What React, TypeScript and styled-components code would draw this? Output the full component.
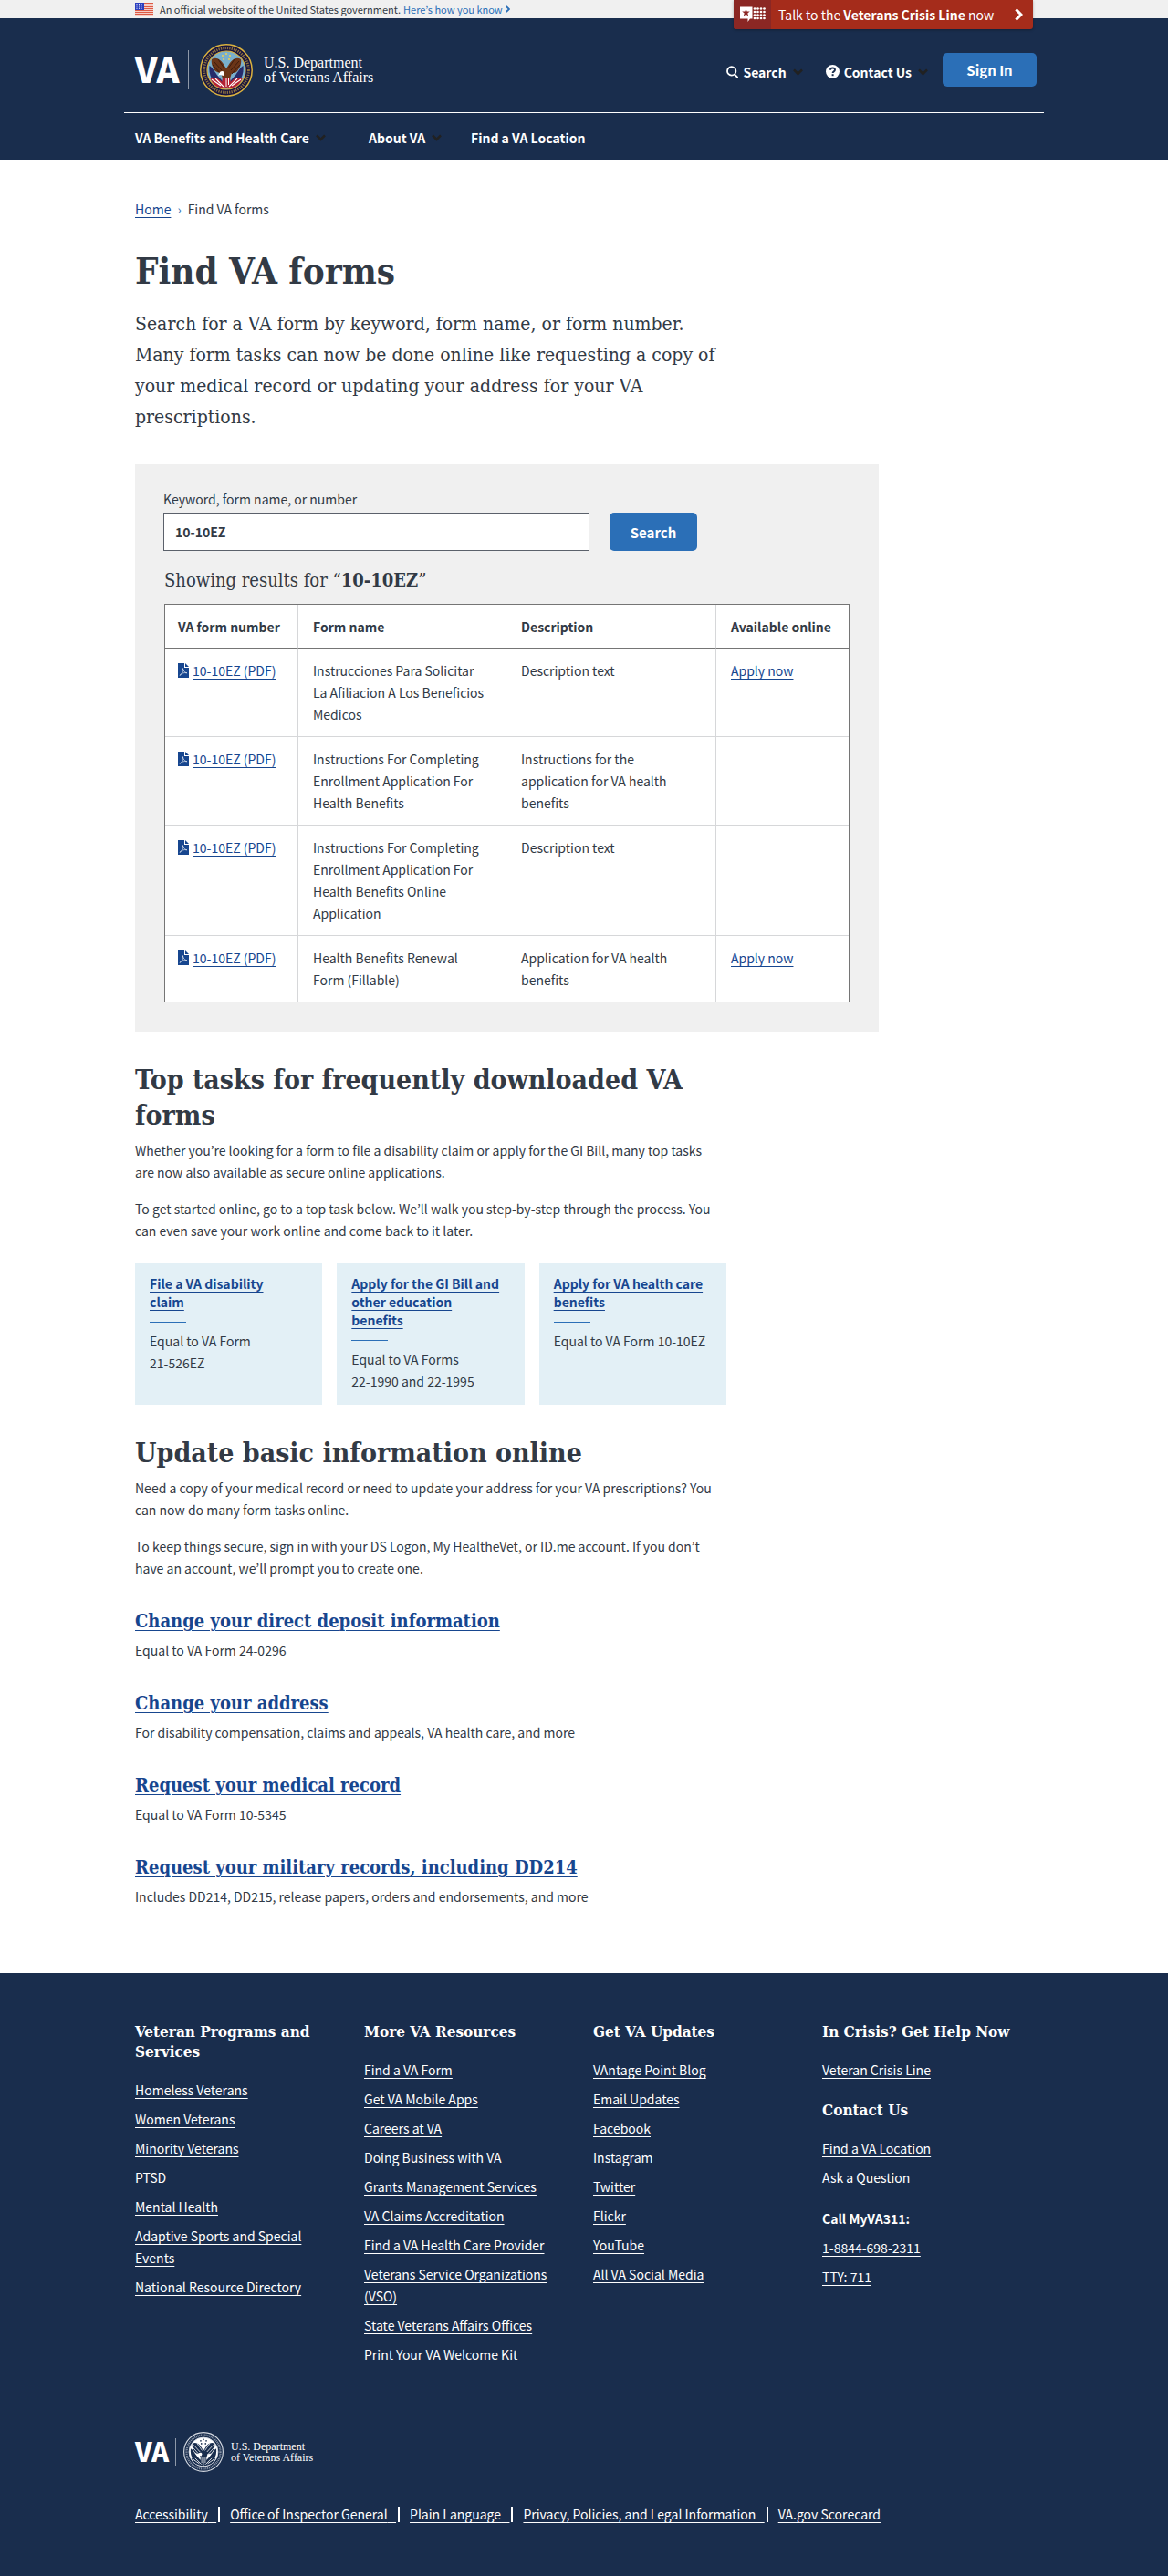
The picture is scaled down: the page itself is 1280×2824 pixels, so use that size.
import React from "react";
import styled, { createGlobalStyle, css } from "styled-components";

const sans = '"Noto Sans CJK KR", "Noto Sans", sans-serif';
const slab = '"DejaVu Serif Condensed", "DejaVu Serif", serif';
const navy = "#192d4d";
const ink = "#323a45";
const linkBlue = "#17468f";
const blue = "#2b6fb7";
const gray = "#f0f0f0";

const GlobalStyle = createGlobalStyle`
  *, *::before, *::after { box-sizing: border-box; }
  body {
    margin: 0;
    background: #fff;
    color: ${ink};
    font-family: ${sans};
    font-size: 14px;
    line-height: 24px;
  }
  h1, h2, h3, h4, p, ul { margin: 0; padding: 0; }
  ul { list-style: none; }
  button, input { font-family: inherit; font-size: inherit; }
`;

const Container = styled.div`
  max-width: 1008px;
  margin: 0 auto;
  padding: 0 12px;
`;

const Link = styled.a`
  color: ${linkBlue};
  text-decoration: underline;
  text-decoration-thickness: 1px;
  text-underline-offset: 3px;
`;

/* ---------- Government banner ---------- */

const Banner = styled.div`
  background: ${gray};
`;

const BannerRow = styled(Container)`
  position: relative;
  display: flex;
  align-items: center;
  height: 20px;
  font-size: 11px;
  line-height: 20px;
`;

const BannerText = styled.span`
  margin: 0 3px 0 7px;
`;

const BannerToggle = styled.button`
  display: flex;
  align-items: center;
  gap: 3px;
  padding: 0;
  border: 0;
  background: none;
  color: ${blue};
  line-height: 20px;
  cursor: pointer;

  span {
    text-decoration: underline;
    text-underline-offset: 2px;
  }
`;

const CrisisButton = styled.button`
  position: absolute;
  top: 0;
  right: 12px;
  display: flex;
  align-items: stretch;
  width: 328px;
  height: 32px;
  padding: 0;
  overflow: hidden;
  border: 0;
  border-radius: 0 0 3px 3px;
  background: #a52c1b;
  box-shadow: 0 1px 3px rgba(0, 0, 0, 0.3);
  color: #fff;
  font-size: 14px;
  line-height: 32px;
  cursor: pointer;
`;

const CrisisIcon = styled.span`
  display: flex;
  align-items: center;
  justify-content: center;
  width: 41px;
  background: #8b2724;
`;

const CrisisLabel = styled.span`
  flex: 1;
  padding-left: 8px;
  text-align: left;
`;

const CrisisArrow = styled.span`
  display: flex;
  align-items: center;
  padding-right: 11px;
`;

/* ---------- Header ---------- */

const Header = styled.header`
  background: ${navy};
  color: #fff;
`;

const HeaderInner = styled.div`
  max-width: 1008px;
  margin: 0 auto;
`;

const HeaderTop = styled.div`
  display: flex;
  align-items: center;
  justify-content: space-between;
  height: 104px;
  padding: 10px 8px 0 12px;
  border-bottom: 1px solid #fff;
`;

const Brand = styled.a<{ $small?: boolean }>`
  display: flex;
  align-items: center;
  gap: ${(p) => (p.$small ? 8 : 12)}px;
  color: #fff;
  text-decoration: none;
`;

const BrandMark = styled.span<{ $small?: boolean }>`
  width: ${(p) => (p.$small ? 36 : 46)}px;
  padding-bottom: ${(p) => (p.$small ? 4 : 5)}px;
  font-size: ${(p) => (p.$small ? 29 : 38)}px;
  line-height: ${(p) => (p.$small ? 30 : 43)}px;
  font-weight: 900;
`;

const BrandRule = styled.span<{ $small?: boolean }>`
  width: 1px;
  height: ${(p) => (p.$small ? 30 : 43)}px;
  background: #8e98a8;
`;

const BrandName = styled.span<{ $small?: boolean }>`
  font-family: "Liberation Serif", "Times New Roman", serif;
  font-size: ${(p) => (p.$small ? 12 : 16)}px;
  line-height: ${(p) => (p.$small ? 12 : 16)}px;
`;

const Utilities = styled.div`
  display: flex;
  align-items: center;
`;

const MenuButton = styled.button`
  display: flex;
  align-items: center;
  gap: 5px;
  padding: 0;
  border: 0;
  background: none;
  color: #fff;
  font-size: 14px;
  font-weight: 700;
  line-height: 24px;
  text-align: left;
  white-space: nowrap;
  cursor: pointer;

  svg:last-child { margin-left: 2px; }
`;

const UtilityGroup = styled.div`
  display: flex;
  gap: 25px;
  padding: 4px 16px 0 0;
`;

const primary = css`
  border: 0;
  border-radius: 5px;
  background: ${blue};
  color: #fff;
  font-weight: 700;
  text-align: center;
  cursor: pointer;
`;

const SignIn = styled.button`
  ${primary}
  width: 103px;
  height: 37px;
  padding: 0;
  font-size: 15px;
`;

const Nav = styled.nav`
  display: grid;
  grid-template-columns: 256px 112px auto;
  align-items: center;
  height: 51px;
  padding: 2px 12px 0;
`;

const NavLink = styled.a`
  color: #fff;
  font-weight: 700;
  text-decoration: none;
`;

/* ---------- Main ---------- */

const Main = styled.main`
  padding: 42px 0 72px;
`;

const Breadcrumb = styled.nav`
  display: flex;
  gap: 7px;

  span[aria-hidden] { color: ${blue}; }
`;

const Prose = styled.div`
  max-width: 640px;
`;

const PageTitle = styled.h1`
  margin-top: 30px;
  font-family: ${slab};
  font-size: 40px;
  line-height: 52px;
`;

const Intro = styled.p`
  margin-top: 15px;
  font-family: ${slab};
  font-size: 21px;
  line-height: 34px;
`;

const ResultsPanel = styled.section`
  max-width: 815px;
  margin-top: 35px;
  padding: 26px 32px 32px;
  background: ${gray};
`;

const SearchForm = styled.form`
  display: grid;
  grid-template-columns: 467px 96px;
  column-gap: 22px;
  row-gap: 3px;
  margin-left: -1px;

  label { grid-column: 1 / -1; }
`;

const SearchInput = styled.input`
  height: 42px;
  padding: 0 12px;
  border: 1px solid #5b616b;
  border-radius: 0;
  background: #fff;
  color: ${ink};
  font-weight: 700;
`;

const SearchButton = styled.button`
  ${primary}
  height: 42px;
  padding: 0;
  font-size: 15px;
`;

const ResultsTitle = styled.h2`
  margin: 18px 0 12px;
  font-family: ${slab};
  font-size: 20px;
  font-weight: 400;
  line-height: 28px;
`;

const Table = styled.table`
  width: 100%;
  border: 1px solid #757575;
  border-collapse: separate;
  border-spacing: 0;
  table-layout: fixed;
  background: #fff;
`;

const cell = css`
  padding: 12px 16px;
  border-right: 1px solid #d6d7d9;
  text-align: left;
  vertical-align: top;

  &:first-child { padding-left: 14px; padding-right: 8px; }
  &:last-child { border-right: 0; padding-right: 8px; }
`;

const Th = styled.th<{ $w?: number }>`
  ${cell}
  ${(p) => (p.$w ? `width: ${p.$w}px;` : "")}
  padding-bottom: 11px;
  border-bottom: 1px solid #757575;
`;

const Td = styled.td`
  ${cell}
  border-bottom: 1px solid #d6d7d9;

  tr:last-child > & { border-bottom: 0; }
`;

const PdfLink = styled.span`
  display: flex;
  align-items: center;
  gap: 4px;
`;

const SectionTitle = styled.h2`
  font-family: ${slab};
  font-size: 30px;
  line-height: 39px;
`;

const Section = styled.section`
  max-width: 648px;
  margin-top: 33px;

  > p {
    max-width: 640px;
    margin-top: 16px;
  }
  > h2 + p { margin-top: 7px; }
`;

const Cards = styled.div`
  display: grid;
  grid-template-columns: repeat(3, 1fr);
  gap: 16px;
  margin-top: 24px;
`;

const Card = styled.div`
  min-height: 155px;
  padding: 12px 16px 14px;
  background: #e3f0f6;
`;

const CardTitle = styled.h3`
  font-size: 14px;
  line-height: 20px;

  &::after {
    content: "";
    display: block;
    width: 40px;
    height: 1px;
    margin: 12px 0 8px;
    background: ${blue};
  }
`;

const Task = styled.div`
  margin-top: 30px;
`;

const TaskTitle = styled.h3`
  margin-bottom: 4px;
  font-family: ${slab};
  font-size: 20px;
  line-height: 32px;
`;

/* ---------- Footer ---------- */

const Footer = styled.footer`
  padding: 53px 0 56px;
  background: ${navy};
  color: #fff;
`;

const FooterColumns = styled.div`
  display: grid;
  grid-template-columns: repeat(4, 1fr);
  column-gap: 20px;
  min-height: 450px;
`;

const FooterColumn = styled.div`
  padding-right: 14px;
`;

const FooterTitle = styled.h4`
  font-family: ${slab};
  font-size: 17px;
  line-height: 22px;

  ul + & { margin-top: 21px; }
`;

const FooterList = styled.ul`
  margin-top: 19px;

  li + li { margin-top: 8px; }
`;

const FooterLink = styled(Link)`
  color: #fff;
`;

const CallList = styled(FooterList)`
  margin-top: 21px;
`;

const LegalLinks = styled.ul`
  display: flex;
  margin-top: 34px;

  li + li {
    margin-left: 2px;
  }
  li + li::before {
    content: "";
    display: inline-block;
    width: 2px;
    height: 17px;
    margin-right: 11px;
    background: #fff;
    vertical-align: -3px;
  }
`;

/* ---------- Drawings ---------- */

const Flag = () => (
  <svg width="20" height="14" viewBox="0 0 20 14" role="img" aria-label="U.S. flag">
    <rect width="20" height="14" fill="#fff" />
    {[0, 2, 4, 6, 8, 10, 12].map((y) => (
      <rect key={y} y={y} width="20" height="1.3" fill="#dc5a45" />
    ))}
    <rect width="10" height="8" fill="#2b3fc0" />
    {[2, 4.5, 7].map((x) => [1.6, 4, 6.2].map((y) => (
      <circle key={`${x}-${y}`} cx={x} cy={y} r=".6" fill="#fff" />
    )))}
  </svg>
);

const Chevron = ({ color = "#212121" }: { color?: string }) => (
  <svg width="11" height="8" viewBox="0 0 11 8" fill="none" stroke={color} strokeWidth="2.6" aria-hidden="true">
    <path d="M1 1.4 5.5 5.9 10 1.4" />
  </svg>
);

const ArrowRight = ({ w, h, s }: { w: number; h: number; s: number }) => (
  <svg width={w} height={h} viewBox="0 0 9 14" fill="none" stroke="currentColor" strokeWidth={s} aria-hidden="true">
    <path d="M1.4 1.4 7 7l-5.6 5.6" />
  </svg>
);

const ChatKeypad = () => (
  <svg width="29" height="18" viewBox="0 0 29 18" fill="#fff" aria-hidden="true">
    <path d="M1 .5h13.500v13H12L9.500 17v-3.500H1z" />
    <path fill="#8b2724" d="m7.500 2.600 1.100 3h3.200L9.300 7.500l.9 3.100-2.700-1.900-2.700 1.900.9-3.100-2.500-1.900h3.200z" />
    {[17.5, 21, 24.5, 28].map((x) => [2.5, 6, 9.5, 13].map((y) => (
      <circle key={`${x}-${y}`} cx={x - 0.5} cy={y} r="1.350" />
    )))}
  </svg>
);

const SearchIcon = () => (
  <svg width="13" height="14" viewBox="0 0 13 14" fill="none" stroke="#fff" strokeWidth="1.800" aria-hidden="true">
    <circle cx="5.700" cy="5.900" r="4.700" />
    <path d="m9 9.500 3.500 3.500" />
  </svg>
);

const HelpIcon = () => (
  <svg width="15" height="15" viewBox="0 0 15 15" aria-hidden="true">
    <circle cx="7.500" cy="7.500" r="7.500" fill="#fff" />
    <path d="M5 5.700C5 2.700 10 2.800 10 5.600c0 1.900-2.400 1.700-2.400 3.500" fill="none" stroke={navy} strokeWidth="1.900" />
    <rect x="6.600" y="10.200" width="2" height="2" fill={navy} />
  </svg>
);

const PdfIcon = () => (
  <svg width="12" height="16" viewBox="0 0 12 16" aria-hidden="true">
    <path d="M0 0h7v5h5v11H0z" fill={linkBlue} />
    <path d="M8 0 12 4H8z" fill={linkBlue} />
    <path d="M5.300 5.500c1.200 2.800.2 5.200-3.300 8 .8-2 4.500-3.600 8-2.700-2.800-.5-4.500-2.500-4.700-5.300z" fill="none" stroke="#fff" strokeWidth=".6" />
  </svg>
);

const Seal = ({ size, mono }: { size: number; mono?: boolean }) => {
  const gold = mono ? "#d5dae2" : "#d9b13f";
  const ring = mono ? navy : "#17133f";
  const sky = mono ? "#fff" : "#79afcc";
  const wing = mono ? navy : "#6b3518";
  const wingDark = mono ? "#fff" : "#3c1c0e";
  const red = mono ? navy : "#b52232";
  const flagBlue = mono ? navy : "#262c6b";
  return (
    <svg width={size} height={size} viewBox="0 0 58 58" fill="none" role="img" aria-label="Department seal">
      <circle cx="29" cy="29" r="28.200" fill={ring} stroke={gold} strokeWidth="1.500" />
      <circle cx="29" cy="29" r="24.400" stroke={gold} strokeWidth="3" strokeDasharray="1.300 1.100" opacity=".6" />
      <circle cx="29" cy="29" r="21" fill={sky} stroke={gold} strokeWidth="1.200" />
      <path d="M10.500 24c3 1.500 6 7 9 11l9 10-3 3C16 46 9 36 10.500 24zM47.500 24c-3 1.500-6 7-9 11l-9 10 3 3C42 46 49 36 47.500 24z" fill={flagBlue} />
      <path d="M11.500 38c5-2 9 0 12 3l5 8C20 49 14 45 11.500 38zM46.500 38c-5-2-9 0-12 3l-5 8C38 49 44 45 46.500 38z" fill={red} />
      <path d="m13 39 10 7m-6-8 9 9m19-8-10 7m6-8-9 9" stroke="#fff" strokeWidth="1.100" />
      <path d="M13 17c5-3 10 0 14 7l2 3 2-3c4-7 9-10 14-7 1 5-1 9-4 13-2 2-4 2-6 2l-2 6h-8l-2-6c-2 0-5-1-7-3-2-4-4-7-3-12z" fill={wing} />
      <path d="m15 19 9 10m-10-6 9 10m-3-16 7 10m16-8-9 10m10-6-9 10m3-16-7 10" stroke={wingDark} strokeWidth="1" />
      <path d="M22 31c2-2 5-1 5 1l-1 3-4-1-2 1z" fill="#fff" />
      <path d="M25 37h8l1 6-5 6-5-6z" fill={red} />
      <path d="M26.500 37v8m2.500-8v10m2.500-10v8" stroke="#fff" strokeWidth="1" />
      {[[25, 13], [29, 11], [33, 13], [26, 17], [32, 17]].map(([x, y]) => (
        <circle key={`${x}-${y}`} cx={x} cy={y} r="1.100" fill={mono ? navy : "#e6cf5a"} />
      ))}
    </svg>
  );
};

const Logo = ({ small }: { small?: boolean }) => (
  <Brand href="#" $small={small}>
    <BrandMark $small={small}>VA</BrandMark>
    <BrandRule $small={small} />
    <Seal size={small ? 44 : 58} mono={small} />
    <BrandName $small={small}>
      U.S. Department
      <br />
      of Veterans Affairs
    </BrandName>
  </Brand>
);

/* ---------- Content ---------- */

const results = [
  { name: "Instrucciones Para Solicitar La Afiliacion A Los Beneficios Medicos", text: "Description text", online: true },
  { name: "Instructions For Completing Enrollment Application For Health Benefits", text: "Instructions for the application for VA health benefits", online: false },
  { name: "Instructions For Completing Enrollment Application For Health Benefits Online Application", text: "Description text", online: false },
  { name: "Health Benefits Renewal Form (Fillable)", text: "Application for VA health benefits", online: true },
];

const cards = [
  { title: ["File a VA disability", "claim"], text: ["Equal to VA Form", "21-526EZ"] },
  { title: ["Apply for the GI Bill and", "other education", "benefits"], text: ["Equal to VA Forms", "22-1990 and 22-1995"] },
  { title: ["Apply for VA health care", "benefits"], text: ["Equal to VA Form 10-10EZ"] },
];

const tasks = [
  ["Change your direct deposit information", "Equal to VA Form 24-0296"],
  ["Change your address", "For disability compensation, claims and appeals, VA health care, and more"],
  ["Request your medical record", "Equal to VA Form 10-5345"],
  ["Request your military records, including DD214", "Includes DD214, DD215, release papers, orders and endorsements, and more"],
];

const programs = ["Homeless Veterans", "Women Veterans", "Minority Veterans", "PTSD", "Mental Health", "Adaptive Sports and Special Events", "National Resource Directory"];
const resources = ["Find a VA Form", "Get VA Mobile Apps", "Careers at VA", "Doing Business with VA", "Grants Management Services", "VA Claims Accreditation", "Find a VA Health Care Provider", "Veterans Service Organizations (VSO)", "State Veterans Affairs Offices", "Print Your VA Welcome Kit"];
const updates = ["VAntage Point Blog", "Email Updates", "Facebook", "Instagram", "Twitter", "Flickr", "YouTube", "All VA Social Media"];
const legal = ["Accessibility", "Office of Inspector General", "Plain Language", "Privacy, Policies, and Legal Information", "VA.gov Scorecard"];

const LinkList = ({ items }: { items: string[] }) => (
  <FooterList>
    {items.map((t) => (
      <li key={t}><FooterLink href="#">{t}</FooterLink></li>
    ))}
  </FooterList>
);

export default function App() {
  return (
    <>
      <GlobalStyle />
      <Banner>
        <BannerRow>
          <Flag />
          <BannerText>An official website of the United States government.</BannerText>
          <BannerToggle type="button">
            <span>Here’s how you know</span>
            <ArrowRight w={5} h={8} s={3.5} />
          </BannerToggle>
          <CrisisButton type="button">
            <CrisisIcon><ChatKeypad /></CrisisIcon>
            <CrisisLabel>Talk to the <b>Veterans Crisis Line</b> now</CrisisLabel>
            <CrisisArrow><ArrowRight w={9} h={14} s={3} /></CrisisArrow>
          </CrisisButton>
        </BannerRow>
      </Banner>

      <Header>
        <HeaderInner>
          <HeaderTop>
            <Logo />
            <Utilities>
              <UtilityGroup>
                <MenuButton type="button"><SearchIcon />Search<Chevron /></MenuButton>
                <MenuButton type="button"><HelpIcon />Contact Us<Chevron /></MenuButton>
              </UtilityGroup>
              <SignIn type="button">Sign In</SignIn>
            </Utilities>
          </HeaderTop>
          <Nav aria-label="Main">
            <MenuButton type="button">VA Benefits and Health Care<Chevron /></MenuButton>
            <MenuButton type="button">About VA<Chevron /></MenuButton>
            <NavLink href="#">Find a VA Location</NavLink>
          </Nav>
        </HeaderInner>
      </Header>

      <Main>
        <Container>
          <Breadcrumb aria-label="Breadcrumb">
            <Link href="#">Home</Link>
            <span aria-hidden="true">›</span>
            <span>Find VA forms</span>
          </Breadcrumb>
          <Prose>
            <PageTitle>Find VA forms</PageTitle>
            <Intro>
              Search for a VA form by keyword, form name, or form number. Many form tasks can now be done
              online like requesting a copy of your medical record or updating your address for your VA
              prescriptions.
            </Intro>
          </Prose>

          <ResultsPanel>
            <SearchForm onSubmit={(e) => e.preventDefault()}>
              <label htmlFor="form-query">Keyword, form name, or number</label>
              <SearchInput id="form-query" type="text" defaultValue="10-10EZ" />
              <SearchButton type="submit">Search</SearchButton>
            </SearchForm>
            <ResultsTitle>Showing results for “<b>10-10EZ</b>”</ResultsTitle>
            <Table>
              <thead>
                <tr>
                  <Th scope="col" $w={146}>VA form number</Th>
                  <Th scope="col" $w={228}>Form name</Th>
                  <Th scope="col" $w={230}>Description</Th>
                  <Th scope="col">Available online</Th>
                </tr>
              </thead>
              <tbody>
                {results.map((r) => (
                  <tr key={r.name}>
                    <Td><PdfLink><PdfIcon /><Link href="#">10-10EZ (PDF)</Link></PdfLink></Td>
                    <Td>{r.name}</Td>
                    <Td>{r.text}</Td>
                    <Td>{r.online && <Link href="#">Apply now</Link>}</Td>
                  </tr>
                ))}
              </tbody>
            </Table>
          </ResultsPanel>

          <Section>
            <SectionTitle>Top tasks for frequently downloaded VA forms</SectionTitle>
            <p>
              Whether you’re looking for a form to file a disability claim or apply for the GI Bill, many top
              tasks are now also available as secure online applications.
            </p>
            <p>
              To get started online, go to a top task below. We’ll walk you step-by-step through the process.
              You can even save your work online and come back to it later.
            </p>
            <Cards>
              {cards.map((c) => (
                <Card key={c.title[0]}>
                  <CardTitle>
                    <Link href="#">
                      {c.title.map((line, i) => (
                        <React.Fragment key={line}>{i > 0 && <br />}{line}</React.Fragment>
                      ))}
                    </Link>
                  </CardTitle>
                  {c.text.map((t) => <p key={t}>{t}</p>)}
                </Card>
              ))}
            </Cards>
          </Section>

          <Section>
            <SectionTitle>Update basic information online</SectionTitle>
            <p>
              Need a copy of your medical record or need to update your address for your VA prescriptions? You
              can now do many form tasks online.
            </p>
            <p>
              To keep things secure, sign in with your DS Logon, My HealtheVet, or ID.me account. If you don’t
              have an account, we’ll prompt you to create one.
            </p>
            {tasks.map(([title, text]) => (
              <Task key={title}>
                <TaskTitle><Link href="#">{title}</Link></TaskTitle>
                <p>{text}</p>
              </Task>
            ))}
          </Section>
        </Container>
      </Main>

      <Footer>
        <Container>
          <FooterColumns>
            <FooterColumn>
              <FooterTitle>Veteran Programs and Services</FooterTitle>
              <LinkList items={programs} />
            </FooterColumn>
            <FooterColumn>
              <FooterTitle>More VA Resources</FooterTitle>
              <LinkList items={resources} />
            </FooterColumn>
            <FooterColumn>
              <FooterTitle>Get VA Updates</FooterTitle>
              <LinkList items={updates} />
            </FooterColumn>
            <FooterColumn>
              <FooterTitle>In Crisis? Get Help Now</FooterTitle>
              <LinkList items={["Veteran Crisis Line"]} />
              <FooterTitle>Contact Us</FooterTitle>
              <LinkList items={["Find a VA Location", "Ask a Question"]} />
              <CallList>
                <li><b>Call MyVA311:</b></li>
                <li><FooterLink href="#">1-8844-698-2311</FooterLink></li>
                <li><FooterLink href="#">TTY: 711</FooterLink></li>
              </CallList>
            </FooterColumn>
          </FooterColumns>
          <Logo small />
          <LegalLinks>
            {legal.map((t, i) => (
              <li key={t}>
                <FooterLink href="#">{t}{i < legal.length - 1 && "\u00a0\u00a0\u00a0"}</FooterLink>
              </li>
            ))}
          </LegalLinks>
        </Container>
      </Footer>
    </>
  );
}
